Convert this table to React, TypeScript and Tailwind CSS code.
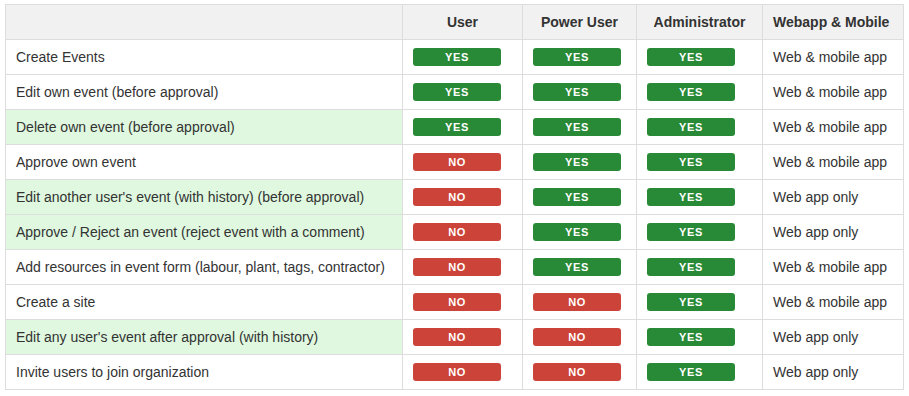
type Perm = {
  label: string;
  highlight: boolean;
  user: boolean;
  power: boolean;
  admin: boolean;
  platform: string;
};

const rows: Perm[] = [
  { label: "Create Events", highlight: false, user: true, power: true, admin: true, platform: "Web & mobile app" },
  { label: "Edit own event (before approval)", highlight: false, user: true, power: true, admin: true, platform: "Web & mobile app" },
  { label: "Delete own event (before approval)", highlight: true, user: true, power: true, admin: true, platform: "Web & mobile app" },
  { label: "Approve own event", highlight: false, user: false, power: true, admin: true, platform: "Web & mobile app" },
  { label: "Edit another user's event (with history) (before approval)", highlight: true, user: false, power: true, admin: true, platform: "Web app only" },
  { label: "Approve / Reject an event (reject event with a comment)", highlight: true, user: false, power: true, admin: true, platform: "Web app only" },
  { label: "Add resources in event form (labour, plant, tags, contractor)", highlight: false, user: false, power: true, admin: true, platform: "Web & mobile app" },
  { label: "Create a site", highlight: false, user: false, power: false, admin: true, platform: "Web & mobile app" },
  { label: "Edit any user's event after approval (with history)", highlight: true, user: false, power: false, admin: true, platform: "Web app only" },
  { label: "Invite users to join organization", highlight: false, user: false, power: false, admin: true, platform: "Web app only" },
];

function Badge({ yes }: { yes: boolean }) {
  return (
    <div
      className={
        yes
          ? "flex h-[18px] w-[88px] items-center justify-center rounded-[3px] bg-[#288a36] text-[11px] font-bold leading-none tracking-[0.6px] text-white"
          : "flex h-[18px] w-[88px] items-center justify-center rounded-[3px] bg-[#cc4439] text-[11px] font-bold leading-none tracking-[0.6px] text-white"
      }
    >
      {yes ? "YES" : "NO"}
    </div>
  );
}

export default function App() {
  return (
    <div className="min-h-[396px] bg-white pl-[5px] pt-[4px] font-['Liberation_Sans',Arial,sans-serif] text-[14px] text-[#333]">
      <table className="w-[898px] table-fixed border-collapse">
        <colgroup>
          <col className="w-[397px]" />
          <col className="w-[120px]" />
          <col className="w-[114px]" />
          <col className="w-[126px]" />
          <col className="w-[141px]" />
        </colgroup>
        <thead>
          <tr className="h-[35px] bg-[#f1f1f1]">
            <th className="border border-[#ddd] px-[10px]"></th>
            <th className="border border-[#ddd] px-[10px] text-center font-bold">User</th>
            <th className="border border-[#ddd] px-[10px] text-center font-bold">Power User</th>
            <th className="border border-[#ddd] px-[10px] text-center font-bold">Administrator</th>
            <th className="whitespace-nowrap border border-[#ddd] px-[10px] text-left font-bold">Webapp &amp; Mobile</th>
          </tr>
        </thead>
        <tbody>
          {rows.map((r) => (
            <tr key={r.label} className="h-[35px]">
              <td
                className={
                  r.highlight
                    ? "whitespace-nowrap border border-[#ddd] bg-[#dff8df] px-[10px]"
                    : "whitespace-nowrap border border-[#ddd] px-[10px]"
                }
              >
                {r.label}
              </td>
              <td className="border border-[#ddd] px-[10px]">
                <Badge yes={r.user} />
              </td>
              <td className="border border-[#ddd] px-[10px]">
                <Badge yes={r.power} />
              </td>
              <td className="border border-[#ddd] px-[10px]">
                <Badge yes={r.admin} />
              </td>
              <td className="whitespace-nowrap border border-[#ddd] px-[10px]">{r.platform}</td>
            </tr>
          ))}
        </tbody>
      </table>
    </div>
  );
}
